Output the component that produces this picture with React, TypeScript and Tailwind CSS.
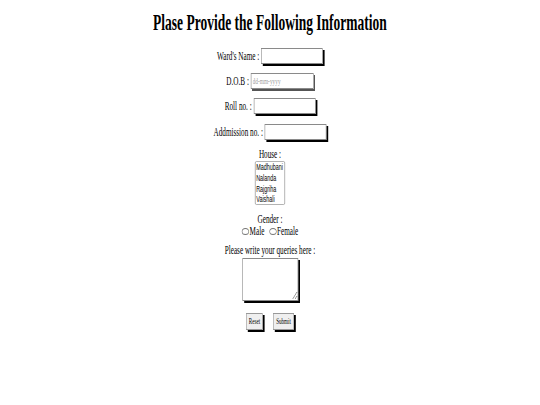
import React from 'react';

const field =
  "h-[16px] border border-[#8a8a8a] bg-white shadow-[3px_2px_0_#000] outline-none px-1";

const App = () => {
  return (
    <div className="w-[540px] h-[405px] overflow-hidden bg-white">
      {/* page is drawn wide and squeezed horizontally, like the reference */}
      <div className="w-[900px] origin-top-left scale-x-[0.6] flex flex-col items-center text-black font-['Liberation_Serif',serif]">
        <h1 className="mt-[9px] text-[22.5px] leading-[28px] font-bold">Plase Provide the Following Information</h1>

        <div className="mt-[11px] flex items-center text-[12px] leading-[16px] gap-[3px]">
          <span>Ward's Name :</span>
          <input type="text" className={`${field} w-[103px]`} />
        </div>

        <div className="mt-[9px] flex items-center text-[12px] leading-[16px] gap-[3px]">
          <span>D.O.B :</span>
          <input
            type="text"
            placeholder="dd-mm-yyyy"
            className="h-[16px] w-[105px] border border-[#8a8a8a] bg-white shadow-[2px_2px_0_#555] outline-none px-[2px] text-[9px] placeholder:text-[#9a9a9a]"
          />
        </div>

        <div className="mt-[9px] flex items-center text-[12px] leading-[16px] gap-[3px]">
          <span>Roll no. :</span>
          <input type="text" className={`${field} w-[103px]`} />
        </div>

        <div className="mt-[10px] flex items-center text-[12px] leading-[16px] gap-[3px]">
          <span>Addmission no. :</span>
          <input type="text" className={`${field} w-[103px]`} />
        </div>

        <div className="mt-[7px] text-[12px] leading-[14px]">House :</div>
        <select
          multiple
          size={4}
          className="w-[50px] h-[44px] border border-[#a0a0a0] rounded-[2px] bg-white overflow-hidden text-[9px] leading-[10px] font-['Liberation_Sans',sans-serif] outline-none py-0"
        >
          <option className="px-[1px] py-0">Madhubani</option>
          <option className="px-[1px] py-0">Nalanda</option>
          <option className="px-[1px] py-0">Rajgriha</option>
          <option className="px-[1px] py-0">Vaishali</option>
        </select>

        <div className="mt-[7px] text-[12px] leading-[14px]">Gender :</div>
        <div className="flex items-center text-[12px] leading-[10px]">
          <label className="flex items-center gap-[1px]">
            <span className="inline-block w-[12px] h-[7px] rounded-[50%] border border-[#777]" />
            Male
          </label>
          <label className="ml-[8px] flex items-center gap-[1px]">
            <span className="inline-block w-[12px] h-[7px] rounded-[50%] border border-[#777]" />
            Female
          </label>
        </div>

        <div className="mt-[7px] text-[12px] leading-[14px]">Please write your queries here :</div>
        <textarea className="mt-[1px] w-[93px] h-[43px] border border-[#8a8a8a] bg-white shadow-[3px_2px_0_#000] outline-none" />

        <div className="mt-[12px] flex items-center gap-[17px]">
          <button className="h-[17px] w-[28px] border border-[#999] bg-[#efefef] shadow-[3px_2px_0_#000] text-[8.5px] leading-[15px]">
            Reset
          </button>
          <button className="h-[17px] w-[35px] border border-[#999] bg-[#efefef] shadow-[3px_2px_0_#000] text-[8.5px] leading-[15px]">
            Submit
          </button>
        </div>
      </div>
    </div>
  );
};

export default App;
